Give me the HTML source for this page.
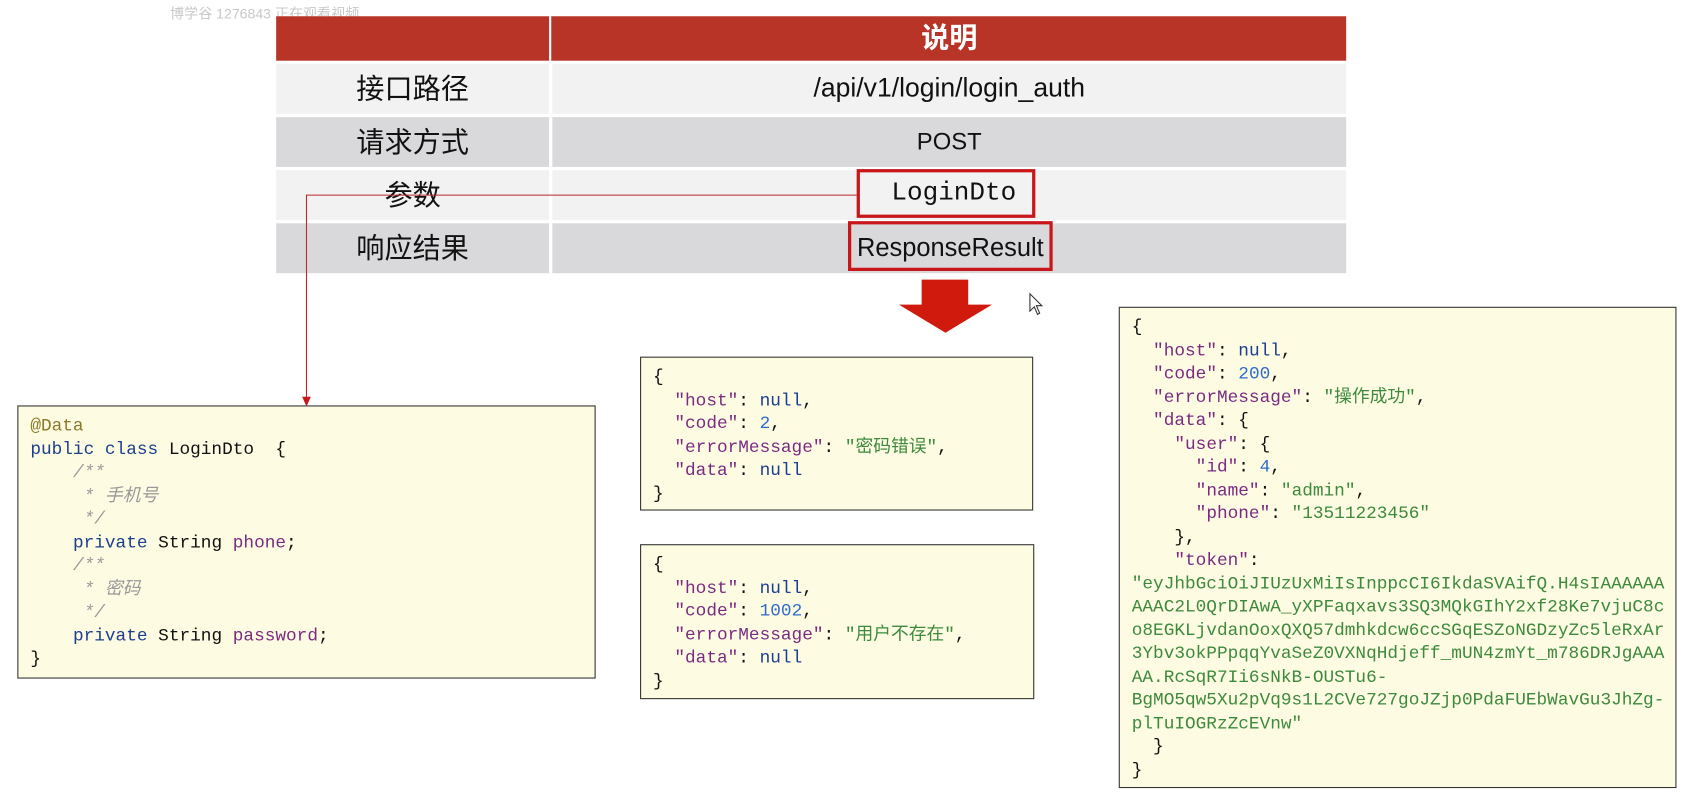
<!DOCTYPE html>
<html><head><meta charset="utf-8"><style>
html,body{margin:0;padding:0;background:#fff;width:1698px;height:793px;overflow:hidden}
#w{position:absolute;left:0;top:0;width:1560px;height:729px;transform:scale(1.083,1.084);transform-origin:0 0}
.a{position:absolute}
.cn{font-family:"Liberation Sans","Noto Sans CJK SC",sans-serif}
.row{position:absolute;left:255px;width:988px;height:46px}
.c1{position:absolute;left:0;width:252px;top:0;height:100%;text-align:center;font-size:26px;line-height:46px;color:#111}
.c2{position:absolute;left:255px;right:0;top:0;height:100%;text-align:center;font-size:22px;line-height:46px;color:#111}
.box{position:absolute;background:#fefbe3;border:1px solid #333;box-sizing:border-box}
pre{margin:0;font-family:"Liberation Mono","Noto Sans CJK SC",monospace;font-size:16.4px;line-height:21.5px;color:#111;position:absolute;left:11px}
.k{color:#7a2b80}.n{color:#1b3f8f}.d{color:#2d6ccb}.s{color:#3d8a3d}.c{color:#999;font-style:italic}.an{color:#8a7a2a}
.rb{position:absolute;border:3px solid #c8161b;box-sizing:border-box;font-family:"Liberation Sans",sans-serif;font-size:23.5px;text-align:center;color:#111}
</style></head><body><div id="w">
<div class="a cn" style="left:157px;top:2px;font-size:13px;color:#c8c8c8">博学谷 1276843 正在观看视频</div>
<div class="row" style="top:15px;height:41px;background:#b83426"><div class="c2 cn" style="left:255px;color:#fff;font-weight:bold;line-height:41px;font-size:26px">说明</div><div class="a" style="left:252px;top:0;width:2px;height:41px;background:#fff"></div></div>
<div class="row cn" style="top:59px;background:#f2f2f2"><div class="c1">接口路径</div><div class="c2" style="font-size:24.5px">/api/v1/login/login_auth</div><div class="a" style="left:252px;top:0;width:3px;height:46px;background:#fff"></div></div>
<div class="row cn" style="top:108px;background:#d9d9db"><div class="c1">请求方式</div><div class="c2">POST</div><div class="a" style="left:252px;top:0;width:3px;height:46px;background:#fff"></div></div>
<div class="row cn" style="top:157px;background:#f2f2f2"><div class="c1">参数</div><div class="a" style="left:252px;top:0;width:3px;height:46px;background:#fff"></div></div>
<div class="row cn" style="top:206px;background:#d9d9db"><div class="c1">响应结果</div><div class="a" style="left:252px;top:0;width:3px;height:46px;background:#fff"></div></div>
<div class="rb" style="left:791px;top:156px;width:165px;height:45px;line-height:40px;font-family:'Liberation Mono',monospace;font-size:24px">&nbsp;LoginDto</div>
<div class="rb" style="left:783px;top:204px;width:189px;height:46px;line-height:42px">ResponseResult</div>
<svg class="a" style="left:0;top:0" width="1560" height="729">
<polyline points="791,180 283,180 283,368" fill="none" stroke="#b8282a" stroke-width="1"/>
<polygon points="279,366 287,366 283,375" fill="#c8161b"/>
<polygon points="851,258 894,258 894,281 916,281 873,307 830,281 851,281" fill="#d01a0d"/>
<path d="M951,271 L951,287 L955,283 L958,290 L960,289 L957,282 L962,282 Z" fill="#fff" stroke="#333" stroke-width="1"/>
</svg>
<div class="box" style="left:16px;top:374px;width:534px;height:252px"><pre style="top:7px"><span class="an">@Data</span>
<span class="n">public class</span> LoginDto  {
    <span class="c">/**
     * 手机号
     */</span>
    <span class="n">private</span> String <span class="k">phone</span>;
    <span class="c">/**
     * 密码
     */</span>
    <span class="n">private</span> String <span class="k">password</span>;
}</pre></div>
<div class="box" style="left:591px;top:329px;width:363px;height:142px"><pre style="top:7px">{
  <span class="k">"host"</span>: <span class="n">null</span>,
  <span class="k">"code"</span>: <span class="d">2</span>,
  <span class="k">"errorMessage"</span>: <span class="s">"密码错误"</span>,
  <span class="k">"data"</span>: <span class="n">null</span>
}</pre></div>
<div class="box" style="left:591px;top:502px;width:364px;height:143px"><pre style="top:7px">{
  <span class="k">"host"</span>: <span class="n">null</span>,
  <span class="k">"code"</span>: <span class="d">1002</span>,
  <span class="k">"errorMessage"</span>: <span class="s">"用户不存在"</span>,
  <span class="k">"data"</span>: <span class="n">null</span>
}</pre></div>
<div class="box" style="left:1033px;top:283px;width:515px;height:444px"><pre style="top:7px">{
  <span class="k">"host"</span>: <span class="n">null</span>,
  <span class="k">"code"</span>: <span class="d">200</span>,
  <span class="k">"errorMessage"</span>: <span class="s">"操作成功"</span>,
  <span class="k">"data"</span>: {
    <span class="k">"user"</span>: {
      <span class="k">"id"</span>: <span class="d">4</span>,
      <span class="k">"name"</span>: <span class="s">"admin"</span>,
      <span class="k">"phone"</span>: <span class="s">"13511223456"</span>
    },
    <span class="k">"token"</span>:
<span class="s">"eyJhbGciOiJIUzUxMiIsInppcCI6IkdaSVAifQ.H4sIAAAAAA
AAAC2L0QrDIAwA_yXPFaqxavs3SQ3MQkGIhY2xf28Ke7vjuC8c
o8EGKLjvdanOoxQXQ57dmhkdcw6ccSGqESZoNGDzyZc5leRxAr
3Ybv3okPPpqqYvaSeZ0VXNqHdjeff_mUN4zmYt_m786DRJgAAA
AA.RcSqR7Ii6sNkB-OUSTu6-
BgMO5qw5Xu2pVq9s1L2CVe727goJZjp0PdaFUEbWavGu3JhZg-
plTuIOGRzZcEVnw"</span>
  }
}</pre></div>
</div></body></html>
